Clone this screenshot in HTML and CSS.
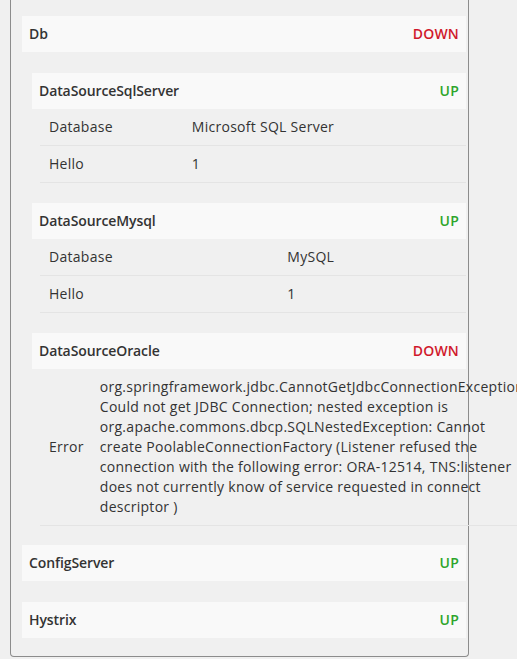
FILE: index.html
```html
<!DOCTYPE html>
<html>
<head>
<meta charset="utf-8">
<link rel="stylesheet" href="styles.css">
</head>
<body>
<div class="panel">
  <div class="section">
    <div class="head"><span class="name">Db</span><span class="status down">DOWN</span></div>
    <div class="children">
      <div class="section">
        <div class="head"><span class="name">DataSourceSqlServer</span><span class="status up">UP</span></div>
        <table class="details">
          <tr><td>Database</td><td>Microsoft SQL Server</td></tr>
          <tr><td>Hello</td><td>1</td></tr>
        </table>
      </div>
      <div class="section">
        <div class="head"><span class="name">DataSourceMysql</span><span class="status up">UP</span></div>
        <table class="details">
          <tr><td>Database</td><td>MySQL</td></tr>
          <tr><td>Hello</td><td>1</td></tr>
        </table>
      </div>
      <div class="section">
        <div class="head"><span class="name">DataSourceOracle</span><span class="status down">DOWN</span></div>
        <table class="details">
          <tr><td>Error</td><td>org.springframework.jdbc.CannotGetJdbcConnectionException: Could not get JDBC Connection; nested exception is org.apache.commons.dbcp.SQLNestedException: Cannot create PoolableConnectionFactory (Listener refused the connection with the following error: ORA-12514, TNS:listener does not currently know of service requested in connect descriptor )</td></tr>
        </table>
      </div>
    </div>
  </div>
  <div class="section">
    <div class="head"><span class="name">ConfigServer</span><span class="status up">UP</span></div>
  </div>
  <div class="section">
    <div class="head"><span class="name">Hystrix</span><span class="status up">UP</span></div>
  </div>
</div>
</body>
</html>
```
FILE: styles.css
```css
html, body {
  margin: 0;
  padding: 0;
  background: #f0f0f0;
}
body {
  font-family: "Open Sans", "Liberation Sans", sans-serif;
  font-size: 14px;
  line-height: 20px;
  color: #333;
}
.panel {
  box-sizing: border-box;
  width: 459px;
  margin-left: 10px;
  border: 1px solid #8c8c8c;
  border-top: none;
  border-radius: 0 0 4px 4px;
  padding: 16px 2px 18px 11px;
}
.panel > .section + .section {
  margin-top: 21px;
}
.panel > .section:nth-child(2) {
  margin-top: 19px;
}
.children {
  padding-left: 10px;
  margin-top: 21px;
}
.children > .section + .section {
  margin-top: 20px;
}
.head {
  display: flex;
  justify-content: space-between;
  align-items: center;
  height: 36px;
  padding: 0 7px;
  background: #f9f9f9;
  font-weight: 600;
  letter-spacing: -0.1px;
}
.status { letter-spacing: 0.2px; }
.status.up { color: #2ea52a; }
.status.down { color: #d0182b; }
.details {
  margin-left: 8px;
  width: calc(100% - 8px);
  border-collapse: collapse;
  letter-spacing: 0.28px;
}
.details td {
  padding: 8px 7px 8px 9px;
  border-bottom: 1px solid #e4e4e4;
  vertical-align: middle;
}
```
